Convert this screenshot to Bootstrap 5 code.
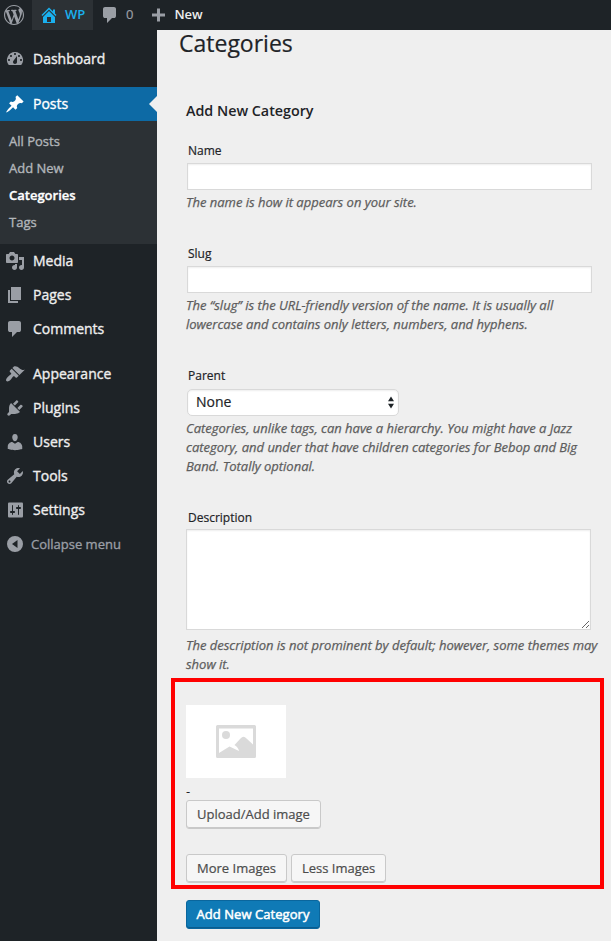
<!DOCTYPE html>
<html lang="en">
<head>
<meta charset="utf-8">
<meta name="viewport" content="width=device-width, initial-scale=1">
<title>Categories</title>
<link href="https://cdn.jsdelivr.net/npm/bootstrap@5.3.0/dist/css/bootstrap.min.css" rel="stylesheet">
<style>
body{font-family:"Open Sans",sans-serif;font-size:13px;background:#efefef;color:#1e2327;height:941px;overflow:hidden}
svg{display:block;flex:none}
.ico{width:20px;height:20px;fill:#9a9ea5}
.adminbar{height:30px;background:#1e2327;color:#eee;font-weight:600;line-height:20px}
.adminbar span{padding-bottom:2px}
.site{width:61px;background:#2c3135;color:#1ab0ee;padding-left:7px}
.site .ico{fill:#1ab0ee}
.site span{padding-left:6px}
.muted{color:#9a9ea5;font-weight:400;padding-left:5px;-webkit-text-stroke:.2px}
.plus{margin-left:15px}
.new-link{padding-left:6px}
.side{width:157px;height:911px;background:#1e2327;padding-top:12px;flex:none}
.side a{display:flex;align-items:center;text-decoration:none;color:#eee;-webkit-text-stroke:.35px}
.item{height:34px;padding-left:5px;gap:8px;font-size:14px}
.item span{padding-bottom:2px}
.gap-above{margin-top:11px}
.side .current{background:#0d6aa5;color:#fff;position:relative}
.current .ico{fill:#fff}
.ico{-webkit-text-stroke:0}
.current::after{content:"";position:absolute;right:0;top:9px;border:8px solid transparent;border-right-color:#efefef;border-left:0}
.submenu{height:123px;background:#2c3135;padding:7px 0 0 9px}
.submenu a{height:27px;color:#b2b6ba}
.submenu a.on{color:#fff;font-weight:600}
.side .collapse-link{color:#9a9ea5;font-size:13px;gap:6px}
.collapse-link span{padding:1px 0 0}
.main{padding-left:29px}
h1{font-size:23px;line-height:28px;font-weight:400;margin:-1px 0 44px -7px;-webkit-text-stroke:.2px}
h2{font-size:14.3px;line-height:20px;font-weight:600;margin:0}
.main label{display:block;font-size:12px;line-height:20px;margin:32px 0 2px 2px;-webkit-text-stroke:.2px}
.main h2+label{margin-top:20px}
.main .form-control,.main .form-select{border:1px solid #d9d9d9;border-radius:0;width:405px;height:27px;margin-left:1px;padding:0 8px;background-color:#fff;box-shadow:inset 0 1px 2px rgba(0,0,0,.07);font-size:14px;color:#1e2327;min-height:0}
.main textarea.form-control{height:101px;margin:1px 0 0;resize:both}
.pick{position:relative;width:212px;margin:3px 0 0 1px}
.main .form-select{width:212px;margin:0;border-radius:5px;background-image:none;line-height:23px;padding-bottom:2px;-webkit-text-stroke:.2px}
.pick svg{position:absolute;right:4px;top:7px;fill:#1e2327}
.hint{font-style:italic;line-height:19px;color:#5d5d5d;margin:3px 0 0;width:420px;letter-spacing:-.01px;-webkit-text-stroke:.25px}
.hint-area{margin-top:6px}
.marked{border:4px solid #f00;width:433px;height:211px;margin:4px 0 0 -15px;padding:23px 0 0 11px}
.thumb{width:100px;height:73px;background:#fff}
.dash{height:22px;line-height:26px}
.more{margin-top:25px}
.main .btn{height:29px;font-size:13px;line-height:26px;padding:0 10px 1px;border:1px solid #c9c9c9;border-radius:3px;background:#f6f6f6;color:#4c4c4c;box-shadow:inset 0 -1px 0 #c9c9c9;-webkit-text-stroke:.2px}
.main .btn-primary{background:#0f7ab6;border-color:#0a669d;color:#fff;box-shadow:inset 0 -1px 0 #0a5c8e;margin-top:11px;width:134px;padding:0 0 1px;letter-spacing:.05px;-webkit-text-stroke:.5px}
</style>
<script src="https://cdn.jsdelivr.net/npm/bootstrap@5.3.0/dist/js/bootstrap.bundle.min.js"></script>
</head>
<body>
<header class="adminbar d-flex align-items-center">
  <svg class="ico ms-1 me-2" viewBox="0 0 20 20"><path d="M20 10c0-5.51-4.49-10-10-10C4.48 0 0 4.49 0 10c0 5.52 4.48 10 10 10 5.51 0 10-4.48 10-10zM7.78 15.37L4.37 6.22c.55-.02 1.17-.08 1.17-.08.5-.06.44-1.13-.06-1.11 0 0-1.45.11-2.37.11-.18 0-.37 0-.58-.01C4.12 2.69 6.87 1.11 10 1.11c2.33 0 4.45.87 6.05 2.34-.68-.11-1.65.39-1.65 1.58 0 .74.45 1.36.9 2.1.35.61.55 1.36.55 2.46 0 1.49-1.4 5-1.4 5l-3.03-8.37c.54-.02.82-.17.82-.17.5-.05.44-1.25-.06-1.22 0 0-1.44.12-2.38.12-.87 0-2.33-.12-2.33-.12-.5-.03-.56 1.2-.06 1.22l.92.08 1.26 3.41zM17.41 10c.24-.64.74-1.87.43-4.25.7 1.29 1.05 2.71 1.05 4.25 0 3.29-1.73 6.24-4.4 7.78.97-2.59 1.94-5.2 2.92-7.78zM6.1 18.09C3.12 16.65 1.11 13.53 1.11 10c0-1.3.23-2.48.72-3.59C3.25 10.3 4.67 14.2 6.1 18.09zm4.03-6.63l2.58 6.98c-.86.29-1.76.45-2.71.45-.79 0-1.57-.11-2.29-.33.81-2.38 1.62-4.74 2.42-7.1z"/></svg>
  <div class="site d-flex align-items-center h-100">
    <svg class="ico" viewBox="0 0 20 20"><path fill-rule="evenodd" d="M16 8.5l1.53 1.53-1.06 1.06L10 4.6l-6.47 6.49-1.06-1.06L10 2.5l4 4v-2h2v4zm-6-2.46l6 5.99V18H4v-5.97zM12 17v-5H8v5h4z"/></svg>
    <span>WP</span>
  </div>
  <svg class="ico ms-2" viewBox="1 0 20 20"><path d="M5 2h9q.82 0 1.41.59T16 4v7q0 .82-.59 1.41T14 13h-2l-5 5v-5H5q-.82 0-1.41-.59T3 11V4q0-.82.59-1.41T5 2z"/></svg>
  <span class="muted">0</span>
  <svg class="ico plus" viewBox="0 0 20 20"><path d="M17 8.5v3h-5v5H9v-5H4v-3h5v-5h3v5z"/></svg>
  <span class="new-link">New</span>
</header>
<div class="d-flex">
  <nav class="side">
    <a class="item" href="#"><svg class="ico" viewBox="0 0 20 20"><path fill-rule="evenodd" d="M3.76 16h12.48A7.998 7.998 0 0 0 10 3a7.998 7.998 0 0 0-6.24 13zM10 4c.55 0 1 .45 1 1s-.45 1-1 1-1-.45-1-1 .45-1 1-1zM6 6c.55 0 1 .45 1 1s-.45 1-1 1-1-.45-1-1 .45-1 1-1zm8 0c.55 0 1 .45 1 1s-.45 1-1 1-1-.45-1-1 .45-1 1-1zm-5.37 5.55L12 7v6c0 1.1-.9 2-2 2s-2-.9-2-2c0-.57.24-1.08.63-1.45zM4 10c.55 0 1 .45 1 1s-.45 1-1 1-1-.45-1-1 .45-1 1-1zm12 0c.55 0 1 .45 1 1s-.45 1-1 1-1-.45-1-1 .45-1 1-1z"/></svg><span>Dashboard</span></a>
    <a class="item current gap-above" href="#"><svg class="ico" viewBox="0 0 20 20"><path d="M10.44 3.02l1.82-1.82 6.36 6.35-1.83 1.82c-1.05-.68-2.48-.57-3.41.36l-.75.75c-.92.93-1.04 2.35-.35 3.41l-1.83 1.82-2.41-2.41-2.8 2.79c-.42.42-3.38 2.71-3.8 2.29s1.86-3.39 2.28-3.81l2.79-2.79L4.1 9.36l1.83-1.82c1.05.69 2.48.57 3.4-.36l.75-.75c.93-.92 1.05-2.35.36-3.41z"/></svg><span>Posts</span></a>
    <div class="submenu">
      <a href="#">All Posts</a>
      <a href="#">Add New</a>
      <a class="on" href="#">Categories</a>
      <a href="#">Tags</a>
    </div>
    <a class="item" href="#"><svg class="ico" viewBox="0 0 20 20"><path fill-rule="evenodd" d="M13 11V4c0-.55-.45-1-1-1h-1.67L9 1H5L3.67 3H2c-.55 0-1 .45-1 1v7c0 .55.45 1 1 1h10c.55 0 1-.45 1-1zM7 4.5c1.38 0 2.5 1.12 2.5 2.5S8.38 9.5 7 9.5 4.5 8.38 4.5 7 5.62 4.5 7 4.5zM14 6h5v10.5c0 1.38-1.12 2.5-2.5 2.5S14 17.88 14 16.5s1.12-2.5 2.5-2.5c.17 0 .34.02.5.05V9h-3V6zm-4 8.05V13h2v3.5c0 1.38-1.12 2.5-2.5 2.5S7 17.88 7 16.5 8.12 14 9.5 14c.17 0 .34.02.5.05z"/></svg><span>Media</span></a>
    <a class="item" href="#"><svg class="ico" viewBox="0 0 20 20"><path d="M6 15V2h10v13H6zm-1 1h8v2H3V5h2v11z"/></svg><span>Pages</span></a>
    <a class="item" href="#"><svg class="ico" viewBox="0 0 20 20"><path d="M5 2h9q.82 0 1.41.59T16 4v7q0 .82-.59 1.41T14 13h-2l-5 5v-5H5q-.82 0-1.41-.59T3 11V4q0-.82.59-1.41T5 2z"/></svg><span>Comments</span></a>
    <a class="item gap-above" href="#"><svg class="ico" viewBox="0 0 20 20"><path d="M14.48 11.06L7.41 3.99l1.5-1.5c.5-.56 2.3-.47 3.51.32 1.21.8 1.43 1.28 2.91 2.1 1.18.64 2.45 1.26 4.45.85zm-.71.71L6.7 4.7 4.93 6.47c-.39.39-.39 1.02 0 1.41l1.06 1.06c.39.39.39 1.03 0 1.42-.6.6-1.43 1.11-2.21 1.69-.35.26-.7.53-1.01.84C1.43 14.23.4 16.08 1.4 17.07c.99 1 2.84-.03 4.18-1.36.31-.31.58-.66.85-1.02.57-.78 1.08-1.61 1.69-2.21.39-.39 1.02-.39 1.41 0l1.06 1.06c.39.39 1.02.39 1.41 0z"/></svg><span>Appearance</span></a>
    <a class="item" href="#"><svg class="ico" viewBox="0 0 20 20"><path d="M13.11 4.36L9.87 7.6 8 5.73l3.24-3.24c.35-.34 1.05-.2 1.56.32.52.51.66 1.21.31 1.55zm-8 1.77l.91-1.12 9.01 9.01-1.19.84c-.71.71-2.63 1.16-3.82 1.16H6.14L4.9 17.26c-.59.59-1.54.59-2.12 0-.59-.58-.59-1.53 0-2.12l1.24-1.24v-3.88c0-1.13.4-3.19 1.09-3.89zm7.26 3.97l3.24-3.24c.34-.35 1.04-.21 1.55.31.52.51.66 1.21.31 1.55l-3.24 3.25z"/></svg><span>Plugins</span></a>
    <a class="item" href="#"><svg class="ico" viewBox="0 0 20 20"><path d="M10 9.25c-2.27 0-2.73-3.44-2.73-3.44C7 4.02 7.82 2 9.97 2c2.16 0 2.98 2.02 2.71 3.81 0 0-.41 3.44-2.68 3.44zm0 2.57L12.72 10c2.39 0 4.52 2.33 4.52 4.53v2.49s-3.65 1.13-7.24 1.13c-3.65 0-7.24-1.13-7.24-1.13v-2.49c0-2.25 1.94-4.48 4.47-4.48z"/></svg><span>Users</span></a>
    <a class="item" href="#"><svg class="ico" viewBox="0 0 20 20"><path fill-rule="evenodd" d="M16.68 9.77c-1.34 1.34-3.3 1.67-4.95.99l-5.41 6.52c-.99.99-2.59.99-3.58 0s-.99-2.59 0-3.57l6.52-5.42c-.68-1.65-.35-3.61.99-4.95 1.28-1.28 3.12-1.62 4.72-1.06l-2.89 2.89 2.82 2.82 2.86-2.87c.53 1.58.18 3.39-1.08 4.65zM3.81 16.21c.4.39 1.04.39 1.43 0 .4-.4.4-1.04 0-1.43-.39-.4-1.03-.4-1.43 0-.39.39-.39 1.03 0 1.43z"/></svg><span>Tools</span></a>
    <a class="item" href="#"><svg class="ico" viewBox="0 0 20 20"><path fill-rule="evenodd" d="M18 16V4c0-1.1-.4-1.5-1.5-1.5h-12C3.4 2.5 3 2.9 3 4v12c0 1.1.4 1.5 1.5 1.5h12c1.1 0 1.5-.4 1.5-1.5zM8 11h1c.55 0 1 .45 1 1s-.45 1-1 1H8v1.5c0 .28-.22.5-.5.5s-.5-.22-.5-.5V13H6c-.55 0-1-.45-1-1s.45-1 1-1h1V5.5c0-.28.22-.5.5-.5s.5.22.5.5V11zm5-2h-1c-.55 0-1-.45-1-1s.45-1 1-1h1V5.5c0-.28.22-.5.5-.5s.5.22.5.5V7h1c.55 0 1 .45 1 1s-.45 1-1 1h-1v5.5c0 .28-.22.5-.5.5s-.5-.22-.5-.5V9z"/></svg><span>Settings</span></a>
    <a class="item collapse-link" href="#"><svg class="ico" viewBox="0 0 20 20"><path fill-rule="evenodd" d="M10 2a8 8 0 1 0 0 16 8 8 0 0 0 0-16zm2.5 4v8L7 10z"/></svg><span>Collapse menu</span></a>
  </nav>
  <main class="main">
    <h1>Categories</h1>
    <h2>Add New Category</h2>
    <label for="f-name">Name</label>
    <input id="f-name" class="form-control" type="text">
    <p class="hint">The name is how it appears on your site.</p>
    <label for="f-slug">Slug</label>
    <input id="f-slug" class="form-control" type="text">
    <p class="hint">The “slug” is the URL-friendly version of the name. It is usually all<br>lowercase and contains only letters, numbers, and hyphens.</p>
    <label for="f-parent">Parent</label>
    <div class="pick">
      <select id="f-parent" class="form-select"><option>None</option></select>
      <svg width="8" height="13" viewBox="0 0 8 13"><path d="M1 5.2L4 .5l3 4.7zM1 7.8h6l-3 4.7z"/></svg>
    </div>
    <p class="hint">Categories, unlike tags, can have a hierarchy. You might have a Jazz<br>category, and under that have children categories for Bebop and Big<br>Band. Totally optional.</p>
    <label class="mb-0" for="f-desc">Description</label>
    <textarea id="f-desc" class="form-control"></textarea>
    <p class="hint hint-area">The description is not prominent by default; however, some themes may<br>show it.</p>
    <section class="marked">
      <div class="thumb d-flex align-items-center justify-content-center">
        <svg width="40" height="33" viewBox="0 0 40 33"><path fill="#dadada" fill-rule="evenodd" d="M1.5 0h37A1.5 1.5 0 0 1 40 1.5v30a1.5 1.5 0 0 1-1.5 1.5h-37A1.5 1.5 0 0 1 0 31.5v-30A1.5 1.5 0 0 1 1.5 0zM3 3.500V28l10.500-6.500 9.500 4.500c-.4-2.500-2-4.300-4.500-6L24.500 13.500q3-3.500 6 0l6.500 6v-16z"/><circle cx="10" cy="10" r="4" fill="#dadada"/></svg>
      </div>
      <div class="dash">-</div>
      <button class="btn d-block" type="button">Upload/Add image</button>
      <div class="d-flex gap-1 more">
        <button class="btn" type="button">More Images</button>
        <button class="btn" type="button">Less Images</button>
      </div>
    </section>
    <button class="btn btn-primary d-block" type="button">Add New Category</button>
  </main>
</div>
</body>
</html>
